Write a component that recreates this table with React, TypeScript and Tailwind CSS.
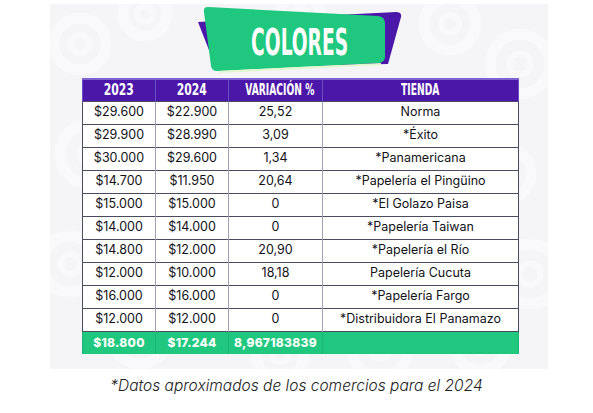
import React from 'react';

interface Fila {
  a2023: string;
  a2024: string;
  variacion: string;
  tienda: string;
}

const filas: Fila[] = [
  { a2023: '$29.600', a2024: '$22.900', variacion: '25,52', tienda: 'Norma' },
  { a2023: '$29.900', a2024: '$28.990', variacion: '3,09', tienda: '*Éxito' },
  { a2023: '$30.000', a2024: '$29.600', variacion: '1,34', tienda: '*Panamericana' },
  { a2023: '$14.700', a2024: '$11.950', variacion: '20,64', tienda: '*Papelería el Pingüino' },
  { a2023: '$15.000', a2024: '$15.000', variacion: '0', tienda: '*El Golazo Paisa' },
  { a2023: '$14.000', a2024: '$14.000', variacion: '0', tienda: '*Papelería Taiwan' },
  { a2023: '$14.800', a2024: '$12.000', variacion: '20,90', tienda: '*Papelería el Río' },
  { a2023: '$12.000', a2024: '$10.000', variacion: '18,18', tienda: 'Papelería Cucuta' },
  { a2023: '$16.000', a2024: '$16.000', variacion: '0', tienda: '*Papelería Fargo' },
  { a2023: '$12.000', a2024: '$12.000', variacion: '0', tienda: '*Distribuidora El Panamazo' },
];

const condensada = "font-['DejaVu_Sans_Condensed','DejaVu_Sans',sans-serif]";

// anillos blancos del fondo
const anillos = [
  [30, 40, 26], [95, 10, 22], [40, 150, 30], [20, 260, 28], [90, 330, 30],
  [230, 350, 24], [330, 345, 28], [430, 340, 26], [400, 20, 26], [470, 60, 30],
  [455, 170, 26], [480, 270, 30], [250, 10, 20],
];

function Fondo() {
  return (
    <svg className="absolute inset-0" width="498" height="365" viewBox="0 0 498 365">
      {anillos.map(([cx, cy, r], i) => (
        <g key={i} fill="none" stroke="#ffffff" strokeOpacity="0.4">
          <circle cx={cx} cy={cy} r={r} strokeWidth="11" />
          <circle cx={cx} cy={cy} r={r * 0.35} strokeWidth="6" />
        </g>
      ))}
    </svg>
  );
}

function Insignia() {
  return (
    <div className="relative ml-[145px] mt-[4px] flex h-[70px] w-[210px] items-center justify-center pt-[6px]">
      <svg className="absolute inset-0" width="210" height="70" viewBox="0 0 210 70">
        <path d="M3 18 L201 8 Q207 8 206 13 L193 60 L21 64 Z" fill="#4a17a8" />
        <path
          d="M13 3 L183 12 Q190 13 190 19 L190 53 Q190 58 184 59 L22 67 Q17 67 16 62 L9 8 Q8 3 13 3 Z"
          fill="#1fc87e"
        />
        <path d="M24 68 L186 60" stroke="#e3f7cf" strokeWidth="2" />
      </svg>
      <span
        className={`relative inline-block whitespace-nowrap text-[37px] leading-none font-bold text-white scale-x-[0.56] ${condensada}`}
      >
        COLORES
      </span>
    </div>
  );
}

export default function App() {
  const celda = 'h-[23px] p-0 text-center border-x border-x-[#a29eb6]';
  const th = `h-[22px] p-0 text-center whitespace-nowrap font-bold text-white text-[15px] leading-none border-x border-x-[#6b4fc0] ${condensada}`;

  return (
    <div className="min-h-[413px] w-[593px] bg-white">
      <div className="relative ml-[50px] h-[365px] w-[498px] bg-[#f5f4f7]">
        <Fondo />
        <div className="relative">
          <Insignia />
          <table className="ml-[32px] mt-[4px] w-[436px] table-fixed border-collapse font-['Inter',sans-serif] text-[12.5px] font-normal text-[#111116]">
            <colgroup>
              <col className="w-[73px]" />
              <col className="w-[73px]" />
              <col className="w-[94px]" />
              <col className="w-[196px]" />
            </colgroup>
            <thead>
              <tr className="bg-[#4b17a8] border-t-2 border-t-[#7d62d2]">
                <th className={th}>
                  <span className="inline-block scale-x-[0.8]">2023</span>
                </th>
                <th className={th}>
                  <span className="inline-block scale-x-[0.8]">2024</span>
                </th>
                <th className={th}>
                  <span className="inline-block scale-x-[0.68]">VARIACIÓN %</span>
                </th>
                <th className={th}>
                  <span className="inline-block scale-x-[0.68]">TIENDA</span>
                </th>
              </tr>
            </thead>
            <tbody>
              {filas.map((f, i) => (
                <tr key={i} className="bg-white border-y border-y-[#4a4a60]">
                  <td className={`${celda} border-l-[#4a4a60]`}>{f.a2023}</td>
                  <td className={celda}>{f.a2024}</td>
                  <td className={celda}>{f.variacion}</td>
                  <td className={`${celda} border-r-[#4a4a60]`}>{f.tienda}</td>
                </tr>
              ))}
              <tr className="bg-[#1fc87e] text-white font-extrabold tracking-[0.3px] text-[12px]">
                <td className="h-[23px] p-0 text-center border-x border-[#1bb571]">$18.800</td>
                <td className="h-[23px] p-0 text-center border-x border-[#1bb571]">$17.244</td>
                <td className="h-[23px] p-0 text-center border-x border-[#1bb571]">8,967183839</td>
                <td className="h-[23px] p-0 text-center border-x border-[#1bb571]"></td>
              </tr>
            </tbody>
          </table>
        </div>
      </div>
      <p className="mt-[5px] text-center font-['Inter',sans-serif] text-[15.5px] font-light italic text-[#222]">
        *Datos aproximados de los comercios para el 2024
      </p>
    </div>
  );
}
